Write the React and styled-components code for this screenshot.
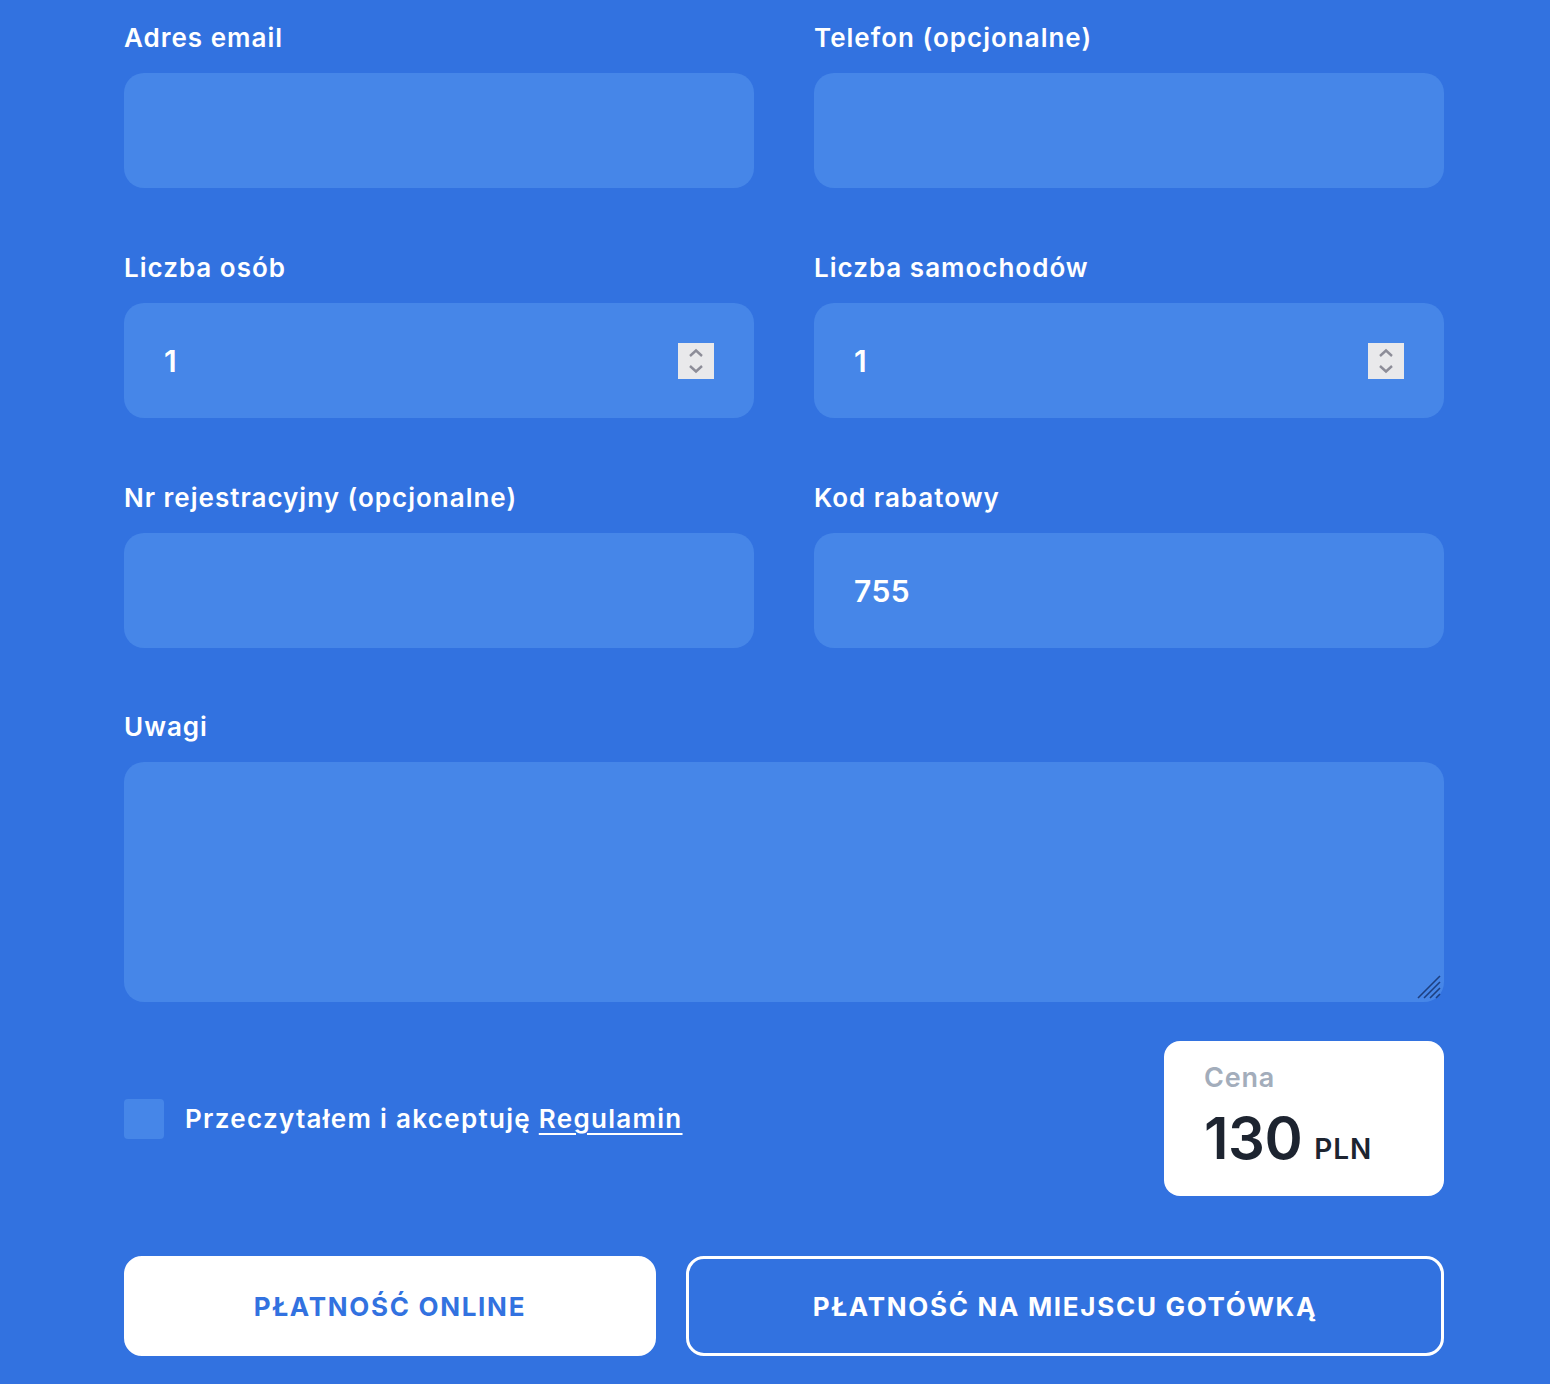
import React from "react";
import styled, { createGlobalStyle } from "styled-components";

const BLUE = "#3272e0";
const FIELD = "#4686e8";

const GlobalStyle = createGlobalStyle`
  body {
    margin: 0;
    background: ${BLUE};
    font-family: Inter, "Noto Sans", sans-serif;
  }
`;

const Page = styled.div`
  width: 1320px;
  padding: 22px 0 28px 124px;
  display: flex;
  flex-direction: column;
  gap: 63px;
`;

const Grid = styled.div`
  display: grid;
  grid-template-columns: 630px 630px;
  column-gap: 60px;
  row-gap: 64px;
`;

const Field = styled.div`
  display: flex;
  flex-direction: column;
  gap: 19px;
`;

const Label = styled.label`
  font-size: 26px;
  line-height: 32px;
  font-weight: 600;
  color: #fff;
  letter-spacing: 1px;
`;

const InputWrap = styled.div`
  position: relative;
  height: ${props => props.height || 115}px;
  background: ${FIELD};
  border-radius: 20px;
`;

const Input = styled.input`
  box-sizing: border-box;
  width: 100%;
  height: 100%;
  border: none;
  outline: none;
  background: transparent;
  padding: 0 40px;
  font-family: inherit;
  font-size: 30px;
  font-weight: 600;
  letter-spacing: 0.5px;
  color: #fff;
`;

const TextArea = styled.textarea`
  box-sizing: border-box;
  width: 100%;
  height: 100%;
  border: none;
  outline: none;
  resize: none;
  background: transparent;
  padding: 24px 40px;
  font-family: inherit;
  font-size: 26px;
  color: #fff;
`;

const Spinner = styled.div`
  position: absolute;
  right: 40px;
  top: 40px;
  width: 36px;
  height: 36px;
  background: #e9e9eb;
  display: flex;
  align-items: center;
  justify-content: center;
`;

const Grip = styled.svg`
  position: absolute;
  right: 2px;
  bottom: 2px;
`;

const Bottom = styled.div`
  display: flex;
  align-items: center;
  justify-content: space-between;
  margin-top: -24px;
`;

const Agree = styled.label`
  display: flex;
  align-items: center;
  gap: 21px;
  font-size: 26px;
  font-weight: 600;
  letter-spacing: 1.3px;
  color: #fff;
`;

const Box = styled.span`
  width: 40px;
  height: 40px;
  border-radius: 4px;
  background: ${FIELD};
`;

const Link = styled.a`
  color: #fff;
  text-decoration: underline;
  text-decoration-thickness: 2px;
  text-underline-offset: 5px;
`;

const PriceCard = styled.div`
  box-sizing: border-box;
  width: 280px;
  height: 155px;
  background: #fff;
  border-radius: 16px;
  padding: 21px 40px 0;
`;

const PriceLabel = styled.div`
  font-size: 27px;
  line-height: 32px;
  font-weight: 600;
  letter-spacing: 0.8px;
  color: #a3adbb;
`;

const PriceValue = styled.div`
  margin-top: 12px;
  display: flex;
  align-items: baseline;
  gap: 12px;
  color: #1d2430;
  font-weight: 600;
`;

const Amount = styled.span`
  font-size: 58px;
  line-height: 64px;
  letter-spacing: -0.5px;
`;

const Currency = styled.span`
  font-size: 28px;
  letter-spacing: 1px;
`;

const Buttons = styled.div`
  display: flex;
  gap: 30px;
  margin-top: -3px;
`;

const Button = styled.button`
  box-sizing: border-box;
  width: ${props => props.width}px;
  height: 100px;
  border-radius: 18px;
  border: 3px solid #fff;
  background: ${props => (props.filled ? "#fff" : "transparent")};
  color: ${props => (props.filled ? BLUE : "#fff")};
  font-family: inherit;
  font-size: 26px;
  font-weight: 700;
  letter-spacing: 1.7px;
  cursor: pointer;
`;

const NumberSpinner = () => (
  <Spinner>
    <svg width="20" height="28" viewBox="0 0 20 28" fill="none">
      <path d="M4 9 L10 3.5 L16 9" stroke="#8d8d98" strokeWidth="2.4" />
      <path d="M4 19 L10 24.5 L16 19" stroke="#8d8d98" strokeWidth="2.4" />
    </svg>
  </Spinner>
);

const App = () => (
  <>
    <GlobalStyle />
    <Page>
      <Grid>
        <Field>
          <Label>Adres email</Label>
          <InputWrap>
            <Input type="email" />
          </InputWrap>
        </Field>
        <Field>
          <Label>Telefon (opcjonalne)</Label>
          <InputWrap>
            <Input type="tel" />
          </InputWrap>
        </Field>
        <Field>
          <Label>Liczba osób</Label>
          <InputWrap>
            <Input defaultValue="1" />
            <NumberSpinner />
          </InputWrap>
        </Field>
        <Field>
          <Label>Liczba samochodów</Label>
          <InputWrap>
            <Input defaultValue="1" />
            <NumberSpinner />
          </InputWrap>
        </Field>
        <Field>
          <Label>Nr rejestracyjny (opcjonalne)</Label>
          <InputWrap>
            <Input />
          </InputWrap>
        </Field>
        <Field>
          <Label>Kod rabatowy</Label>
          <InputWrap>
            <Input defaultValue="755" />
          </InputWrap>
        </Field>
      </Grid>

      <Field>
        <Label>Uwagi</Label>
        <InputWrap height={240}>
          <TextArea />
          <Grip width="26" height="26" viewBox="0 0 26 26">
            <path
              d="M2 24 L24 2 M8 24 L24 8 M14 24 L24 14 M20 24 L24 20"
              stroke="#1d3f80"
              strokeWidth="1.6"
            />
          </Grip>
        </InputWrap>
      </Field>

      <Bottom>
        <Agree>
          <Box />
          <span>
            Przeczytałem i akceptuję <Link href="#">Regulamin</Link>
          </span>
        </Agree>
        <PriceCard>
          <PriceLabel>Cena</PriceLabel>
          <PriceValue>
            <Amount>130</Amount>
            <Currency>PLN</Currency>
          </PriceValue>
        </PriceCard>
      </Bottom>

      <Buttons>
        <Button filled width={532}>PŁATNOŚĆ ONLINE</Button>
        <Button width={758}>PŁATNOŚĆ NA MIEJSCU GOTÓWKĄ</Button>
      </Buttons>
    </Page>
  </>
);

export default App;
